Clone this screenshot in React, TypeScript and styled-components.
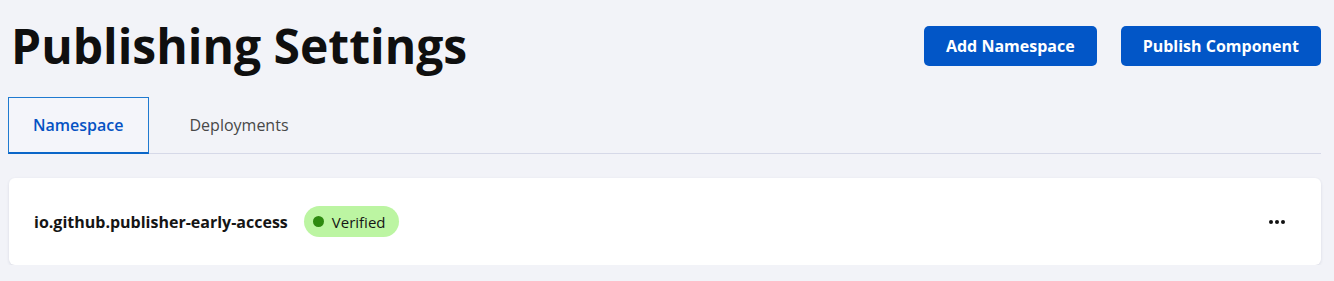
import styled, { createGlobalStyle } from "styled-components"

const GlobalStyle = createGlobalStyle`
    body {
        margin: 0;
        background: #f2f3f8;
        font-family: "Open Sans", "Liberation Sans", sans-serif;
        color: #151515;
    }
`

const Page = styled.div`
    padding: 14px 13px 0 8px;
`

const Header = styled.div`
    display: flex;
    justify-content: space-between;
    align-items: flex-start;
    h1 {
        margin: 0 0 0 3px;
        font-size: 48px;
        font-weight: 700;
        line-height: 64px;
        color: #0f0f0f;
    }
    .actions {
        display: flex;
        gap: 24px;
        padding-top: 12px;
    }
`

const Button = styled.button`
    height: 40px;
    padding: 0 22px;
    border: none;
    border-radius: 5px;
    background: #0256c7;
    color: white;
    font-family: inherit;
    font-size: 16px;
    font-weight: 700;
    cursor: pointer;
`

const Tabs = styled.div`
    display: flex;
    margin-top: 19px;
    border-bottom: 1px solid #d6d9e8;
`

const Tab = styled.button<{ $active?: boolean }>`
    height: 57px;
    padding: 0 24px;
    margin-bottom: -1px;
    background: ${p => (p.$active ? "#f4f5fa" : "transparent")};
    border: 1px solid ${p => (p.$active ? "#1f7ad0" : "transparent")};
    border-bottom: 2px solid ${p => (p.$active ? "#0a66c8" : "transparent")};
    color: ${p => (p.$active ? "#0552c3" : "#484848")};
    font-family: inherit;
    font-size: 16px;
    font-weight: ${p => (p.$active ? 600 : 400)};
    margin-right: ${p => (p.$active ? "16px" : "0")};
    cursor: pointer;
`

const Card = styled.div`
    display: flex;
    align-items: center;
    justify-content: space-between;
    height: 87px;
    margin: 24px 0 0 1px;
    padding: 0 32px 0 25px;
    background: white;
    border-radius: 6px;
    box-shadow: 0 1px 3px rgba(30, 40, 80, 0.12);
    .name {
        display: flex;
        align-items: center;
        gap: 16px;
        font-size: 16px;
        font-weight: 700;
    }
`

const Badge = styled.span`
    display: inline-flex;
    align-items: center;
    gap: 8px;
    height: 31px;
    padding: 0 13px 0 9px;
    border-radius: 16px;
    background: #bcf5a2;
    font-size: 15px;
    font-weight: 400;
    color: #151515;
    &::before {
        content: "";
        width: 11px;
        height: 11px;
        border-radius: 50%;
        background: #2e8a10;
    }
`

const Kebab = styled.button`
    display: flex;
    gap: 2px;
    padding: 4px;
    border: none;
    background: none;
    cursor: pointer;
    span {
        width: 4px;
        height: 4px;
        border-radius: 50%;
        background: #111;
    }
`

const App = () => {
    return (
        <Page>
            <GlobalStyle />
            <Header>
                <h1>Publishing Settings</h1>
                <div className="actions">
                    <Button>Add Namespace</Button>
                    <Button>Publish Component</Button>
                </div>
            </Header>
            <Tabs>
                <Tab $active>Namespace</Tab>
                <Tab>Deployments</Tab>
            </Tabs>
            <Card>
                <div className="name">
                    io.github.publisher-early-access
                    <Badge>Verified</Badge>
                </div>
                <Kebab aria-label="More actions">
                    <span />
                    <span />
                    <span />
                </Kebab>
            </Card>
        </Page>
    )
}

export default App
